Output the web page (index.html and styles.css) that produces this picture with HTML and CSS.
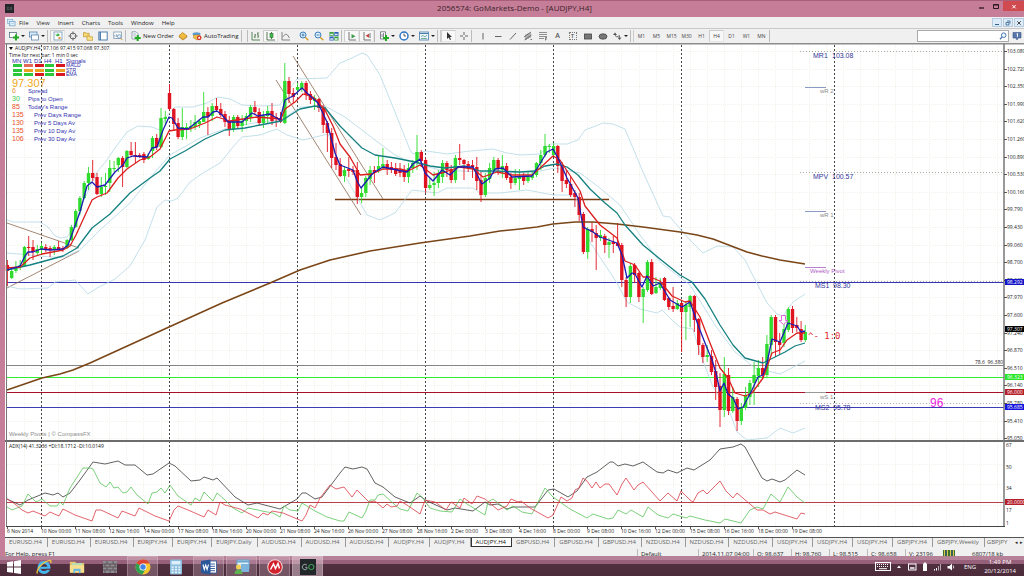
FILE: index.html
```html
<!DOCTYPE html>
<html lang="en">
<head>
<meta charset="utf-8">
<title>2056574: GoMarkets-Demo - [AUDJPY,H4]</title>
<link rel="stylesheet" href="styles.css">
</head>
<body>
<div class="window">
  <header class="titlebar">
    <svg class="app-icon" viewBox="0 0 9 9"><rect width="9" height="9" fill="#26262a"/><path d="M4 3.4H2.2v2.2H4V4.6M5.2 3.4h1.6v2.2H5.2z" fill="none" stroke="#6b7a70" stroke-width=".5"/></svg>
    <h1 class="title">2056574: GoMarkets-Demo - [AUDJPY,H4]</h1>
    <div class="win-buttons">
      <button class="win-btn" aria-label="Minimise"><svg viewBox="0 0 10 10"><path d="M3 7h5" stroke="#2c1620" stroke-width="1.3"/></svg></button>
      <button class="win-btn" aria-label="Maximise"><svg viewBox="0 0 10 10"><path d="M2.5 3.5h5v4h-5zM2.5 4h5" fill="none" stroke="#2c1620"/></svg></button>
      <button class="win-btn close" aria-label="Close"><svg viewBox="0 0 10 10"><path d="M3.3 4l3.4 3.4M6.7 4L3.3 7.4" stroke="#fff"/></svg></button>
    </div>
  </header>

  <nav class="menubar">
    <svg class="menu-icon" viewBox="0 0 10 9"><rect x=".5" y=".5" width="6" height="4.5" fill="#dcefff" stroke="#7aa5c8" stroke-width=".7"/><rect x="2.5" y="2.7" width="6.5" height="5" fill="#e8f5ff" stroke="#5d93c0" stroke-width=".7"/><path d="M3.5 6l1.5-1.4 1 1 2-1.5" fill="none" stroke="#68a0cc" stroke-width=".6"/></svg>
    <button class="menu">File</button>
    <button class="menu">View</button>
    <button class="menu">Insert</button>
    <button class="menu">Charts</button>
    <button class="menu">Tools</button>
    <button class="menu">Window</button>
    <button class="menu">Help</button>
    <div class="mdi-buttons">
      <button class="mdi" aria-label="Minimise chart"><svg viewBox="0 0 8 8"><path d="M2 5.5h4" stroke="#35608c"/></svg></button>
      <button class="mdi" aria-label="Restore chart"><svg viewBox="0 0 8 8"><path d="M3 2h3v2.5M2 3.5h3v2.5H2z" fill="none" stroke="#35608c" stroke-width=".8"/></svg></button>
      <button class="mdi" aria-label="Close chart"><svg viewBox="0 0 8 8"><path d="M2.3 2.3l3.4 3.4M5.7 2.3L2.3 5.7" stroke="#444"/></svg></button>
    </div>
  </nav>

  <div class="toolbar" role="toolbar">
    <button class="tool drop" aria-label="New chart"><svg viewBox="0 0 10 10"><rect x=".5" y="1.5" width="7" height="5" fill="#fff" stroke="#5d6f80" stroke-width=".8"/><path d="M7 3.5v6M4 6.5h6" stroke="#22a822" stroke-width="2"/></svg><i class="caret"></i></button>
    <button class="tool drop" aria-label="Profiles"><svg viewBox="0 0 10 10"><rect x=".5" y="1" width="7.5" height="5" fill="#d9ecfb" stroke="#5b87ad" stroke-width=".8"/><rect x="2.5" y="4" width="7" height="5" fill="#fff" stroke="#5b87ad" stroke-width=".8"/></svg><i class="caret"></i></button>
    <span class="sep"></span>
    <button class="tool on" aria-label="Market Watch"><svg viewBox="0 0 10 10"><rect x="1" y="1" width="8" height="8" fill="#fff" stroke="#6b93b4" stroke-width=".8"/><path d="M2 3.5h2.5V2L7 4 4.500 5.500z" fill="#2fae3c"/><circle cx="6.500" cy="7" r="1.200" fill="#e09b3a"/></svg></button>
    <button class="tool" aria-label="Data Window"><svg viewBox="0 0 10 10"><circle cx="5" cy="5" r="3" fill="none" stroke="#666"/><path d="M5 .5v3M5 6.500v3M.5 5h3M6.500 5h3" stroke="#666"/></svg></button>
    <button class="tool" aria-label="Navigator"><svg viewBox="0 0 10 10"><path d="M.5 1.500h2l.7.8h3v3.500H.5z" fill="#f6d671" stroke="#b58a1c" stroke-width=".6"/><path d="M4 5h2l.7.8h3v3.500H4z" fill="#fbe38c" stroke="#b58a1c" stroke-width=".6"/></svg></button>
    <button class="tool" aria-label="Terminal"><svg viewBox="0 0 10 10"><rect x=".8" y="1" width="8.400" height="8" fill="#fff" stroke="#4f7eae"/><path d="M1.500 1v8h1.500V1z" fill="#4f7eae"/></svg></button>
    <button class="tool" aria-label="Strategy Tester"><svg viewBox="0 0 10 10"><rect x=".8" y="1" width="7.500" height="6.500" fill="#fff" stroke="#7b98b2" stroke-width=".8"/><path d="M2 6V4M3.500 6V3M5 6V3.500" stroke="#7b98b2" stroke-width=".7"/><circle cx="6.300" cy="5.500" r="1.800" fill="#e4f2fc" stroke="#6389ab" stroke-width=".7"/><path d="M7.500 7l2 2.200" stroke="#c99b3c"/></svg></button>
    <span class="sep wide"></span>
    <button class="tool text neworder"><svg viewBox="0 0 10 10"><path d="M1 .8h4l2 2V8H1z" fill="#fff" stroke="#7b8fa2" stroke-width=".8"/><path d="M2.200 3h3M2.200 5h3" stroke="#7b8fa2" stroke-width=".7"/><path d="M6.700 4v6M3.700 7h6" stroke="#22a822" stroke-width="2"/></svg>New Order</button>
    <button class="tool" aria-label="MetaEditor"><svg viewBox="0 0 10 10"><path d="M.8 5L4.500 1.500 9.200 5 5 8.500z" fill="#f2bb3e" stroke="#b37c14" stroke-width=".7"/><path d="M1 6l4 3 4.200-3" fill="none" stroke="#c38a1f" stroke-width=".8"/></svg></button>
    <button class="tool text autotrade"><svg viewBox="0 0 10 10"><ellipse cx="4.500" cy="3" rx="4" ry="1.700" fill="#5a9bd2"/><path d="M1.500 4h6.500v3L5 9 1.500 7z" fill="#f0c24d" stroke="#a87f23" stroke-width=".5"/><circle cx="7.200" cy="6.800" r="2.400" fill="#d9342b"/><rect x="6.300" y="5.900" width="1.800" height="1.800" fill="#fff"/></svg>AutoTrading</button>
    <span class="sep double"></span>
    <button class="tool" aria-label="Bar chart"><svg viewBox="0 0 10 10"><path d="M1 9V1M1 9h8M4 7V3M3 6h1M4 4h1M7 7V1M6 3h1M7 5h1" fill="none" stroke="#4a7a4a" stroke-width=".9"/></svg></button>
    <button class="tool on" aria-label="Candlesticks"><svg viewBox="0 0 10 10"><path d="M1 9V1M1 9h8M5.500 1v7" fill="none" stroke="#4a6a4a" stroke-width=".9"/><rect x="4" y="2.500" width="3" height="4" fill="#3fc04a" stroke="#286b2c" stroke-width=".6"/></svg></button>
    <button class="tool" aria-label="Line chart"><svg viewBox="0 0 10 10"><path d="M1 9V1M1 9h8M1.500 6l3-3 2 1 2 3" fill="none" stroke="#777" stroke-width=".9"/></svg></button>
    <span class="sep blank"></span>
    <button class="tool" aria-label="Zoom in"><svg viewBox="0 0 10 10"><circle cx="4" cy="4" r="3" fill="#dceefb" stroke="#3b7fc0"/><path d="M2.500 4h3M4 2.500v3" stroke="#2d6cab" stroke-width=".8"/><path d="M6.300 6.300l3 3" stroke="#d6a02c" stroke-width="1.500"/></svg></button>
    <button class="tool" aria-label="Zoom out"><svg viewBox="0 0 10 10"><circle cx="4" cy="4" r="3" fill="#dceefb" stroke="#3b7fc0"/><path d="M2.500 4h3" stroke="#2d6cab" stroke-width=".8"/><path d="M6.300 6.300l3 3" stroke="#d6a02c" stroke-width="1.500"/></svg></button>
    <button class="tool" aria-label="Tile windows"><svg viewBox="0 0 10 10"><rect x=".5" y="1" width="4.200" height="4" fill="#3da23d"/><rect x="5.300" y="1" width="4.200" height="4" fill="#2c62b5"/><rect x=".5" y="5.500" width="4.200" height="4" fill="#2c62b5"/><rect x="5.300" y="5.500" width="4.200" height="4" fill="#3da23d"/><path d="M1.300 3.500h2.600M6 3.500h2.600M1.300 8h2.600M6 8h2.600" stroke="#e6f3ff" stroke-width="1.400"/></svg></button>
    <span class="sep"></span>
    <button class="tool on" aria-label="Auto scroll"><svg viewBox="0 0 10 10"><path d="M2 1v8h7" fill="none" stroke="#666" stroke-width=".9"/><path d="M4.500 3l4 2.200-4 2.200z" fill="#3e9b4c"/></svg></button>
    <button class="tool on" aria-label="Chart shift"><svg viewBox="0 0 10 10"><path d="M2 1v8h7M8 2v5" fill="none" stroke="#666" stroke-width=".9"/><path d="M7 2.800L3.500 4.800 7 6.800z" fill="#c24040"/></svg></button>
    <span class="sep"></span>
    <button class="tool drop" aria-label="Indicators"><svg viewBox="0 0 10 10"><path d="M1.500.8h5V8h-5z" fill="#fff" stroke="#667" stroke-width=".8"/><path d="M3 6V3M4.500 6V2" stroke="#667" stroke-width=".8"/><path d="M7 4v6M4 7h6" stroke="#22a822" stroke-width="2"/></svg><i class="caret"></i></button>
    <button class="tool drop" aria-label="Periods"><svg viewBox="0 0 10 10"><circle cx="5" cy="5" r="4" fill="#fff" stroke="#2e76c4" stroke-width="1.500"/><path d="M5 2.500V5h2" fill="none" stroke="#333" stroke-width=".8"/></svg><i class="caret"></i></button>
    <button class="tool drop" aria-label="Templates"><svg viewBox="0 0 10 10"><rect x=".5" y="1" width="9" height="8" fill="#e9f5ff" stroke="#4a7ca8" stroke-width=".8"/><path d="M.5 2.500h9" stroke="#4a7ca8"/><path d="M2 5.500l2-1 2 1.500 2-2M2 7.500h6" fill="none" stroke="#53906a" stroke-width=".7"/></svg><i class="caret"></i></button>
    <span class="sep double wide"></span>
    <button class="tool on" aria-label="Cursor"><svg viewBox="0 0 10 10"><path d="M3 1v7l1.700-1.600L6 9l1-.5-1.200-2.500H8z" fill="#333"/></svg></button>
    <button class="tool" aria-label="Crosshair"><svg viewBox="0 0 10 10"><path d="M5 1v3M5 6v3M1 5h3M6 5h3" stroke="#555" stroke-width=".9"/></svg></button>
    <span class="sep wide"></span>
    <button class="tool" aria-label="Vertical line"><svg viewBox="0 0 10 10"><path d="M5 2v6.500" stroke="#555" stroke-width=".9"/></svg></button>
    <button class="tool" aria-label="Horizontal line"><svg viewBox="0 0 10 10"><path d="M2 5.500h6.500" stroke="#555" stroke-width=".9"/></svg></button>
    <button class="tool" aria-label="Trendline"><svg viewBox="0 0 10 10"><path d="M2 8.500L8 2" stroke="#555" stroke-width=".9"/></svg></button>
    <button class="tool" aria-label="Channel"><svg viewBox="0 0 10 10"><path d="M1 6l7-5M1.500 9l7-5M3 3.500V9M5 2.500V8M7 2v5M7.500 8.500h1.500" stroke="#555" stroke-width=".8"/></svg></button>
    <button class="tool" aria-label="Fibonacci"><svg viewBox="0 0 10 10"><path d="M1 1.500h8M1 3.500h8M1 5.500h8M1 7.500h5" stroke="#777" stroke-width=".8"/><path d="M7.500 9.500v-3H9M7.500 8H9" fill="none" stroke="#555" stroke-width=".7"/></svg></button>
    <button class="tool glyph">A</button>
    <button class="tool glyph boxed"><span>T</span></button>
    <button class="tool" aria-label="Rectangle"><svg viewBox="0 0 10 10"><rect x="1.500" y="3" width="7" height="5" fill="#777" stroke="#444" stroke-width=".8"/></svg></button>
    <button class="tool" aria-label="Ellipse"><svg viewBox="0 0 10 10"><ellipse cx="5" cy="5.500" rx="4" ry="2.700" fill="#777" stroke="#444" stroke-width=".8"/></svg></button>
    <button class="tool drop" aria-label="Arrows"><svg viewBox="0 0 10 10"><path d="M3 1.500l2 2.500H1zM7.500 9l2-2.500h-4z" fill="#555"/><path d="M3 4l1.500 2 3-1.500v2" fill="none" stroke="#555" stroke-width=".8"/></svg><i class="caret"></i></button>
    <span class="sep double wide"></span>
    <button class="tool tf">M1</button><button class="tool tf">M5</button><button class="tool tf">M15</button><button class="tool tf">M30</button><button class="tool tf">H1</button><button class="tool tf on">H4</button><button class="tool tf">D1</button><button class="tool tf">W1</button><button class="tool tf">MN</button>
    <span class="sep"></span>
    <label class="search">
      <input type="text" aria-label="Search">
      <svg viewBox="0 0 8 8"><circle cx="4.700" cy="3.200" r="2.300" fill="#eaf4ff" stroke="#4b7bb0"/><path d="M3 5L1 7.300" stroke="#4b7bb0" stroke-width="1.300"/></svg>
    </label>
    <button class="chat" aria-label="Chat"><svg viewBox="0 0 10 10"><path d="M1 1.500h8v5.500H6L5 9 4 7H1z" fill="#5876ab" stroke="#3c5687" stroke-width=".6"/><path d="M4.500 3l1-.5V6" fill="none" stroke="#fff" stroke-width=".9"/></svg></button>
  </div>

  <main class="chart-pane">
    <svg id="chart" class="chart" viewBox="5 43 1019 494" role="img" aria-label="AUDJPY H4 chart">
      <rect x="6" y="43" width="1018" height="494" fill="#fff"/>
      <g id="grid" class="grid"></g>
      <g id="separators" class="separators"></g>

      <g class="levels">
        <path d="M7 282.500H1004" stroke="#3434b4"/>
        <path d="M7 365.500H1004" stroke="#848484"/>
        <path d="M7 377.500H1004" stroke="#2cf02c"/>
        <path d="M7 392.500H1004" stroke="#a8102c"/>
        <path d="M7 407.500H1004" stroke="#3c3cb4"/>
        <path d="M7 502.500H1004" stroke="#bc4048"/>
        <path d="M335 199.500H609" stroke="#7a3c10" stroke-width="1.500"/>
      </g>
      <g class="dotted">
        <path d="M800 51.500H1004M800 281.500H1004M800 172.500H1004" stroke="#a8a8a8"/>
        <path d="M800 403.500H1004" stroke="#b4b4b4"/>
      </g>
      <g class="pivots">
        <path d="M805 87.500H826M805 211.500H826" stroke="#8c9ac4"/>
        <path d="M805 267.500H826" stroke="#b880d0"/>
        <path d="M805 392.500H826" stroke="#999"/>
      </g>
      <g class="trends">
        <path d="M7 223L79 248M7 288L79 251M276 80L361 215M293 56L383 199"/>
      </g>
      <g id="bands" class="bands"></g>
      <g id="candles"></g>
      <g id="averages" class="averages"></g>
      <path d="M781.500 315.500h4v5h2.500l-4.500 4-4.500-4h2.500z" fill="#fff" stroke="#e03ee0" stroke-width=".8"/>

      <g class="label-blue">
        <text x="813" y="58">MR1</text><text x="832" y="58">103.08</text>
        <text x="813" y="179">MPV</text><text x="832" y="179">100.57</text>
        <text x="815" y="288">MS1</text><text x="833" y="288">98.30</text>
        <text x="815" y="410">MS2</text><text x="833" y="410">95.78</text>
      </g>
      <g class="label-grey">
        <text x="820" y="93">wR 2</text><text x="820" y="217">wR 1</text><text x="820" y="399">wS 1</text>
        <text x="9" y="436">Weekly Pivots | © CompassFX</text>
      </g>
      <text class="label-purple" x="810" y="273">Weekly Pivot</text>
      <text class="label-signal" x="808" y="339">^- 1:0</text>
      <text class="label-magenta" x="930" y="407">96</text>
      <text class="label-small" x="975" y="364">78.6&#160; 96.380</text>

      <path d="M9 47h4l-2 3z" fill="#111"/>
      <text class="label-head" x="15" y="50">AUDJPY,H4&#160; 97.106 97.415 97.068 97.307</text>
      <text class="label-head" x="9" y="57">Time for next bar: 1 min 0 sec</text>
      <g id="signals" class="signals"></g>
      <text class="label-price" x="12" y="87">97.307</text>
      <g id="stats" class="stats"></g>

      <rect x="5" y="440" width="1019" height="2" fill="#6c6c6c"/>
      <text class="label-head" x="9" y="448">ADX(14) 41.3236 +DI:18.1712 -DI:10.0149</text>
      <g id="adx" class="adx"></g>

      <path d="M5 43.500H1024" stroke="#8c8c8c" stroke-width="2"/>
      <path d="M6.500 44V527" stroke="#777"/>
      <path d="M1004 44V527" stroke="#777" stroke-width="1.500"/>
      <path d="M6 526.500H1005" stroke="#444"/>
      <g id="axis" class="axis"></g>
    </svg>
  </main>

  <nav class="tabs" id="tabs"></nav>

  <footer class="statusbar">
    <span class="help">For Help, press F1</span>
    <span class="cell profile">Default</span>
    <span class="cell time">2014.11.07 04:00</span>
    <span class="cell">O: 98.637</span>
    <span class="cell">H: 98.760</span>
    <span class="cell">L: 98.515</span>
    <span class="cell">C: 98.658</span>
    <span class="cell">V: 23196</span>
    <span class="traffic"><svg viewBox="0 0 12 7"><rect width="12" height="7" fill="#40702c"/><path d="M1.500 0v7M4.500 0v7M7.500 0v7M10.500 0v7" stroke="#d5c94a"/><path d="M3 0v7M9 0v7" stroke="#34528c"/></svg>6807/18 kb</span>
  </footer>
</div>

<div class="taskbar">
  <button class="start" aria-label="Start"><svg viewBox="0 0 14 14"><path d="M0 2.200l6-.9v5.300H0zM7 1.200L14 0v6.600H7zM0 7.500h6v5.300l-6-.9zM7 7.500h7V14l-7-1.100z" fill="#fff"/></svg></button>
  <button class="task" aria-label="Internet Explorer"><svg viewBox="0 0 16 16"><circle cx="8" cy="8.500" r="5" fill="none" stroke="#45b6ee" stroke-width="3"/><path d="M4.500 8.800h9.500" stroke="#45b6ee" stroke-width="2.200"/><path d="M10 11h5v-1.300h-5z" fill="#5a3a49"/><path d="M1.500 14.500C-.5 12 5 4 13 1.500c2-.5 2.500.8 1.500 2.500" fill="none" stroke="#f0c63e" stroke-width="1.300"/></svg></button>
  <button class="task" aria-label="File Explorer"><svg viewBox="0 0 18 16"><path d="M1 2h6l1 1.500h9V14H1z" fill="#e9c462"/><path d="M3 3.500h12V9H3z" fill="#b9dcb3"/><path d="M1 6h16v8.500H1z" fill="#f8df8e"/><path d="M5 10h8v5h-1.800v-2.500H6.800V15H5z" fill="#6cb7df"/></svg></button>
  <button class="task" aria-label="Bricks"><svg viewBox="0 0 16 14"><rect x="1" y="1" width="14" height="12" fill="#8b8b90"/><path d="M1 4h14M1 7h14M1 10h14M5 1v3M11 1v3M3 4v3M8 4v3M13 4v3M5 7v3M11 7v3M3 10v3M8 10v3M13 10v3" stroke="#5c4e56" stroke-width=".9"/></svg></button>
  <button class="task open" aria-label="Chrome"><svg viewBox="0 0 16 16"><circle cx="8" cy="8" r="7.500" fill="#f5c62d"/><path d="M8 8L1.500 4.200A7.500 7.500 0 0 1 14.600 4.500H8z" fill="#dd4437"/><path d="M8 8L1.500 4.200A7.500 7.500 0 0 0 7.300 15.400L11 9.500z" fill="#2fa152"/><circle cx="8" cy="8" r="3.500" fill="#fff"/><circle cx="8" cy="8" r="2.700" fill="#3f83e6"/></svg></button>
  <button class="task" aria-label="Calculator"><svg viewBox="0 0 14 16"><rect x="1" y=".5" width="12" height="15" rx="1" fill="#8bbbdc"/><rect x="2.500" y="2" width="9" height="3.500" fill="#d9f0fc"/><path d="M2.500 8h9M2.500 10.700h9M2.500 13.400h9" stroke="#e8f5fc" stroke-width="1.700" stroke-dasharray="2.200 1.200"/></svg></button>
  <button class="task open" aria-label="Word"><svg viewBox="0 0 16 16"><rect x="7" y="2" width="8.500" height="12" fill="#fff" stroke="#2a569a" stroke-width=".8"/><path d="M9 5h5M9 7.300h5M9 9.500h5M9 11.700h5" stroke="#2a569a" stroke-width=".9"/><path d="M0 2l9.500-1.600v15.200L0 14z" fill="#2a569a"/><path d="M2 5.500l1.300 5L4.700 6l1.400 4.500 1.400-5" fill="none" stroke="#fff" stroke-width="1.100"/></svg></button>
  <button class="task open" aria-label="Messenger"><svg viewBox="0 0 16 16"><rect x="3" y="1" width="12" height="9" fill="#dceefa" stroke="#6ba4cc"/><path d="M3 2.500h12" stroke="#6ba4cc" stroke-width="2"/><rect x="7" y="5" width="8" height="8" fill="#7cb4dd"/><circle cx="4.500" cy="8" r="2.500" fill="#f3cf55"/><path d="M.5 15c0-6 8-6 8 0z" fill="#5fb04e"/></svg></button>
  <button class="task open" aria-label="Trading app"><svg viewBox="0 0 16 16"><circle cx="8" cy="8" r="7.800" fill="#f2d8d8"/><circle cx="8" cy="8" r="6.800" fill="#d2202c"/><path d="M3.500 10.500L6.500 5l2 4.500L11 4.500l1.500 5" fill="none" stroke="#fff" stroke-width="1.500"/></svg></button>
  <button class="task open active" aria-label="GoMarkets"><svg viewBox="0 0 16 16"><rect width="16" height="16" fill="#22272a"/><path d="M7 6.200A2.700 2.700 0 1 0 7 9.800V8.300H5.200" fill="none" stroke="#9aa5a5"/><circle cx="11.300" cy="8" r="2.600" fill="none" stroke="#3fae5a"/></svg></button>
  <div class="tray">
    <svg class="kbd" viewBox="0 0 16 9"><rect x=".5" y=".5" width="15" height="8" fill="none" stroke="#fff"/><path d="M2 2.500h12M2 4.500h12" stroke="#fff" stroke-dasharray="1 1"/><path d="M4 6.700h8" stroke="#fff"/></svg>
    <svg class="tri" viewBox="0 0 10 10"><path d="M5 3.500l2 2.500H3z" fill="#fff"/></svg>
    <svg viewBox="0 0 10 10"><rect x="1.500" y="2" width="7.500" height="6" fill="none" stroke="#fff"/><path d="M3 6h4.500" stroke="#fff" stroke-width="1.500"/></svg>
    <svg viewBox="0 0 10 10"><path d="M4 .5h2V1.500h1V9H3V1.500h1z" fill="#fff"/></svg>
    <svg viewBox="0 0 10 10"><path d="M1.500 8.500V7M3.500 8.500V6" stroke="#fff"/><path d="M5.500 8.500V4M7.500 8.500V2" stroke="#b9a6b0"/></svg>
    <svg viewBox="0 0 10 10"><path d="M1.500 4h2L6 1.500v7L3.500 6.500h-2z" fill="#fff"/><path d="M7.200 3.500a2.500 2.500 0 0 1 0 3" fill="none" stroke="#fff" stroke-width=".8"/></svg>
    <span class="lang">ENG</span>
    <span class="clock"><span>1:49 PM</span><span>20/12/2014</span></span>
  </div>
</div>
<script src="chart.js"></script>
</body>
</html>
```
FILE: styles.css
```css
* { box-sizing: border-box; }
body {
  margin: 0;
  background: #c67e98;
  font: 6px/8px "Open Sans", "Noto Sans", sans-serif;
  color: #222;
  overflow-x: hidden;
}
button { font: inherit; color: inherit; background: none; border: 0; padding: 0; margin: 0; }
svg { display: block; }

.window { padding-left: 5px; border-top: 1px solid #a85f7a; }

.titlebar { display: flex; height: 16px; align-items: flex-start; }
.app-icon { width: 9px; height: 9px; margin-top: 3px; }
.title { flex: 1; margin: 1px 0 0; text-align: center; font-size: 8px; line-height: 12px; font-weight: 400; color: #3b1f2b; padding-left: 42px; }
.win-buttons { display: flex; }
.win-btn { width: 15px; height: 10px; display: flex; justify-content: center; }
.win-btn svg { width: 10px; height: 10px; }
.win-btn.close { width: 21px; background: #cf4b4f; }

.menubar { display: flex; gap: 8px; height: 11px; align-items: center; background: #f0f0f0; padding-left: 2px; }
.menu-icon { width: 9px; height: 8px; margin-right: -5px; }
.menu { flex: none; line-height: 10px; }
.mdi-buttons { margin-left: auto; display: flex; gap: 1px; }
.mdi { width: 10px; height: 9px; background: #dcebf8; border: 1px solid #b4cbe0; display: flex; align-items: center; justify-content: center; }
.mdi svg { width: 8px; height: 8px; }

.toolbar { display: flex; height: 15px; align-items: center; background: #f0f0f0; border-top: 1px solid #c8c8c8; padding-left: 2px; }
.tool { flex: none; width: 15px; height: 12px; display: flex; align-items: center; justify-content: center; }
.tool svg { width: 10px; height: 10px; flex: none; }
.tool.on { background: #f8f8f8; border: 1px solid #ccc; border-right-color: #e4e4e4; border-bottom-color: #e4e4e4; }
.tool.drop { width: 20px; gap: 2px; }
.caret { border: 2px solid transparent; border-top-color: #222; border-bottom: 0; }
.tool.text { gap: 2px; justify-content: flex-start; color: #222; padding-left: 2px; }
.neworder { width: 46px; }
.autotrade { width: 51px; }
.tool.glyph { font-size: 7px; font-weight: 600; color: #555; }
.tool.boxed span { border: 1px dotted #777; width: 8px; height: 8px; line-height: 6px; font-size: 6px; }
.tool.tf { font-size: 5px; color: #444; }
.tool.text, .tool.drop, .tool.tf { flex: none; }
.neworder.text { width: 46px; }
.autotrade.text { width: 51px; }
.sep { flex: none; width: 3px; height: 12px; border-left: 1px solid #bbb; }
.sep.wide { width: 4px; }
.sep.double { width: 7px; border-right: 1px solid #bbb; }
.sep.double.wide { width: 4px; border-right: 1px solid #ccc; }
.sep.blank { border-color: transparent; }
.search { margin-left: auto; width: 92px; height: 12px; display: flex; align-items: center; background: #fff; border: 1px solid #aaa; }
.search input { flex: 1; min-width: 0; height: 8px; border: 0; padding: 0 2px; font: inherit; background: none; outline: 0; }
.search svg { width: 8px; height: 8px; margin-right: 1px; }
.chat { width: 15px; display: flex; justify-content: center; }
.chat svg { width: 10px; height: 10px; }

.chart-pane { background: #fff; }
.chart { width: 100%; height: auto; }
.grid { stroke: #f3f3ec; stroke-dasharray: 1 1; fill: none; }
.separators { stroke: #444; stroke-dasharray: 2 2; fill: none; }
.levels { fill: none; }
.dotted { fill: none; stroke-dasharray: 1 2; }
.pivots { fill: none; }
.trends { fill: none; stroke: #8b6a50; stroke-width: .8; }
.bands { fill: none; stroke: #b4d8e6; stroke-width: .8; }
.averages { fill: none; stroke-linejoin: round; }
.adx { fill: none; stroke-width: .8; }
.ma-slow { stroke: #7a4618; stroke-width: 1.6; }
.ma-mid { stroke: #148080; stroke-width: 1.3; }
.ma-red { stroke: #dc1e1e; stroke-width: 1.3; }
.ma-blue { stroke: #1c1cb4; stroke-width: 1.3; }
.up { fill: #2edb2e; stroke: #2edb2e; }
.down { fill: #e01420; stroke: #e01420; }
.wick { stroke-width: .9; }
.body { stroke: none; }
.adx-main { stroke: #3a3a3a; }
.adx-plus { stroke: #5cc45c; }
.adx-minus { stroke: #dc3c48; }

.chart text { font-family: "Open Sans", "Noto Sans", sans-serif; }
.chart .label-blue text { font: 7px "Liberation Sans", Arial, sans-serif; fill: #34349a; }
.chart .label-grey text { font: 6px "Liberation Sans", Arial, sans-serif; fill: #8c8c8c; }
.chart .label-purple { font: 6px "Liberation Sans", Arial, sans-serif; fill: #b060c8; }
.chart .label-signal { font: 9px "DejaVu Sans Mono", monospace; fill: #e23030; }
.chart .label-magenta { font: 12px "Liberation Sans", Arial, sans-serif; fill: #f024e0; }
.chart .label-price { font: 11px "Liberation Sans", Arial, sans-serif; fill: #f0a820; }
.chart .label-small { font-size: 5px; fill: #222; }
.chart .label-head { font-size: 5px; fill: #111; }
.chart .signals text { font: 6px "Liberation Sans", Arial, sans-serif; fill: #2c2cac; }
.chart .signals .row-name { font-size: 5px; }
.chart .stats text { font: 6px "Liberation Sans", Arial, sans-serif; fill: #3434b4; }
.chart .stats .value { font-size: 7px; }
.chart .stats .orange { fill: #f0963c; }
.chart .stats .green { fill: #3ccc4c; }
.chart .stats .red { fill: #e8501e; }
.chart .axis text { font-size: 5px; fill: #222; }
.chart .axis .boxed { fill: #fff; }

.tabs { display: flex; height: 12px; background: #f0f0f0; border-top: 1px solid #555; overflow: hidden; }
.tab { flex: none; height: 9px; line-height: 9px; padding: 0 5px 0 4px; color: #666; border-right: 1px solid #999; white-space: nowrap; }
.tab.active { background: #fff; color: #111; border: 1px solid #333; border-top: 0; }
.tab.cut { border-right: 0; padding: 0 0 0 2px; }
.tab-scroll { margin-left: auto; display: flex; }
.tab-scroll button { width: 5px; height: 9px; font-size: 5px; line-height: 9px; }

.statusbar { display: flex; height: 7px; background: #f0f0f0; line-height: 11px; white-space: nowrap; }
.statusbar .help { flex: 1; }
.statusbar .cell { width: 38px; flex: none; padding-left: 3px; border-left: 1px solid #bbb; }
.statusbar .profile { width: 61px; }
.statusbar .time { width: 55px; }
.statusbar .traffic { width: 81px; display: flex; gap: 17px; }
.statusbar .traffic svg { width: 12px; height: 7px; margin-top: 1px; flex: none; }

.taskbar {
  position: relative;
  display: flex;
  height: 21px;
  background: linear-gradient(rgba(178, 130, 152, .85) 0 4px, #96607a 4px 8px, #512f40 8px, #4a2a39);
  color: #fff;
}
.start { width: 27px; display: flex; align-items: center; justify-content: center; }
.start svg { width: 14px; height: 14px; }
.task { width: 31px; margin: 0 1px; height: 21px; display: flex; align-items: center; justify-content: center; }
.task svg { width: 16px; height: 16px; }
.task.open { background: rgba(220, 190, 205, .28); border: 1px solid rgba(230, 205, 215, .3); }
.task.active { background: rgba(230, 205, 215, .5); }
.tray { margin-left: auto; display: flex; align-items: center; gap: 3px; padding-right: 8px; }
.tray svg { width: 10px; height: 10px; }
.tray .kbd { width: 16px; height: 9px; }
.lang { padding: 0 5px; }
.clock { display: flex; flex-direction: column; align-items: center; line-height: 9px; }
```
FILE: chart.js
```js
const NS = 'http://www.w3.org/2000/svg';
const byId = (id) => document.getElementById(id);
function add(parent, name, attrs, text) {
  const el = document.createElementNS(NS, name);
  for (const key in attrs) el.setAttribute(key, attrs[key]);
  if (text !== undefined) el.textContent = text;
  parent.appendChild(el);
  return el;
}

/* One bar: direction, body top, body bottom, high, low */
const bars = `r265,271,260,286 g271,278,269,279 g267,271,261,273 g265,267,260,270 g247,266,246,266 r247,248,236,256
r247,252,240,260 g249,253,245,255 g246,250,243,255 r247,249,244,252 r248,250,246,257 g247,250,245,255 r247,249,241,250
r248,249,246,252 g240,248,239,249 g227,240,225,241 g211,227,209,228 g198,211,196,215 g183,198,181,199 g173,183,167,190
r173,178,160,181 r177,194,173,195 g187,194,177,197 g186,187,173,195 g168,183,160,192 g168,169,161,172 g158,165,157,172
r158,167,156,187 g151,167,150,168 r151,155,142,157 r155,156,142,163 r155,156,153,158 r154,160,152,163 g156,159,153,160
g138,151,136,158 r138,147,134,150 g118,147,108,148 g117,119,111,125 r93,109,84,110 r109,124,108,131 r123,137,118,139
g127,137,108,140 g127,129,123,139 g126,128,120,132 g122,127,115,130 g121,124,119,128 g112,122,92,122 r112,117,107,135
g106,116,103,121 r106,110,98,112 r109,115,103,117 r114,122,111,127 r121,129,116,136 g117,129,115,132 r117,126,115,128
g121,126,115,132 g116,121,113,125 g107,117,105,122 r107,112,101,115 r112,123,108,125 g116,123,111,128 g111,116,106,123
r111,121,103,125 r117,119,113,127 r118,122,112,123 g81,123,63,124 r81,94,77,103 r93,97,88,103 g87,90,83,92
g83,89,81,92 r83,95,81,100 r94,100,91,104 g98,101,95,110 r99,108,98,112 r108,125,105,133 r123,133,121,152
r133,158,128,168 r157,165,143,170 r164,176,158,177 g170,176,166,182 r169,171,157,177 r170,172,166,175 r170,197,162,204
g193,197,187,203 g178,193,176,197 g170,179,166,185 r170,172,166,183 g166,171,155,173 g164,168,148,170 r164,168,160,175
r167,170,162,173 r168,174,163,176 r170,173,163,177 r170,177,165,182 g168,177,163,183 g163,168,160,173 g152,163,135,170
r152,161,150,167 r160,188,158,193 g185,188,178,190 g183,185,172,196 g173,183,170,188 g163,177,160,183 r163,170,161,177
r169,180,165,183 g158,180,155,183 r158,160,144,165 r160,164,159,180 r164,166,161,172 r165,167,160,178 r167,181,157,190
r180,195,172,202 g178,195,173,197 g168,179,163,183 g160,170,157,173 r160,168,158,175 g166,170,155,178 r166,178,163,180
r177,183,173,189 g178,183,169,185 g177,179,169,190 r176,181,173,185 g177,181,172,183 g175,178,172,180 g163,175,162,177
g155,163,150,170 g146,155,134,157 g146,147,144,153 g146,155,143,157 r146,166,145,173 r165,181,162,192 r180,184,170,188
r184,195,177,197 r193,197,190,207 r197,215,193,221 r214,252,212,254 g229,252,227,259 r229,232,222,242 r233,238,225,270
g235,238,230,241 r236,245,234,253 g242,245,238,258 r242,244,236,253 r243,246,223,246 r245,280,243,287 r280,297,277,307
g266,297,263,303 r265,275,263,283 r273,297,272,302 g289,297,287,323 g262,290,260,292 r262,294,259,295 g287,293,277,294
g282,288,278,290 r278,300,277,301 r298,307,297,310 r306,309,287,312 g303,309,300,310 r303,312,302,352 g305,312,302,340
g296,307,295,327 r296,320,295,332 r319,345,318,355 r345,357,343,363 g355,357,345,362 r356,372,350,375 r371,387,360,400
r386,410,373,427 g374,410,357,417 r375,411,368,415 g397,411,387,413 r399,421,397,431 g407,421,403,425 g395,408,387,410
g383,397,380,405 g375,383,362,405 g368,376,360,387 r368,375,357,378 g344,375,335,377 g317,345,315,355 r317,342,315,357
r342,345,333,355 g329,343,320,347 g309,330,307,332 r309,328,306,333 r325,328,317,332 r329,340,321,342 g332,340,325,342`
  .split(/\s+/);
bars.forEach((bar, i) => {
  const [top, bottom, high, low] = bar.slice(1).split(',').map(Number);
  const x = 7.4 + i * 4.267;
  const g = add(byId('candles'), 'g', { class: bar[0] === 'g' ? 'up' : 'down' });
  add(g, 'path', { class: 'wick', d: `M${x.toFixed(1)} ${high}V${low}` });
  add(g, 'rect', { class: 'body', x: (x - 1.7).toFixed(1), y: top, width: 3.4, height: Math.max(bottom - top, 1) });
});

const line = (target, cls, points) => add(byId(target), 'polyline', { class: cls, points });

line('bands', 'upper', '7,220 13,222 40,222 48,227 55,236 61,238 67,237 72,230 84,200 97,172 107,160 115,148 127,132 138,126 152,127 160,130 166,117 175,107 193,107 207,103 218,97 230,99 242,105 260,106 280,105 287,92 297,79 327,78 340,63 352,58 362,53 367,55 380,75 395,112 410,150 413,154 427,151 447,154 470,151 493,149 507,153 520,155 540,154 550,144 567,144 578,140 585,130 593,127 603,123 613,124 625,129 633,148 643,172 663,216 670,217 690,240 703,253 717,246 733,247 745,260 767,303 777,314 783,316 793,302 805,294');
line('bands', 'lower', '7,286 20,289 48,288 55,282 75,280 88,294 97,288 115,279 130,266 145,240 157,207 165,200 172,201 178,198 190,182 203,173 220,163 233,147 242,137 260,135 277,129 287,135 303,140 328,134 334,150 340,167 357,197 367,215 380,220 395,213 412,190 437,193 447,188 473,188 480,193 500,193 527,190 553,195 575,195 582,217 590,242 617,283 627,302 640,309 657,313 662,310 673,321 680,327 693,329 700,353 713,387 730,413 737,432 747,440 767,438 780,428 793,433 805,428');
line('bands', 'middle', '7,253 30,255 50,257 65,257 80,250 100,230 130,203 155,172 170,155 200,138 230,127 260,122 281,120 300,107 325,106 345,117 375,140 395,155 410,162 440,170 480,172 530,173 555,168 580,173 600,188 620,205 640,235 660,262 690,285 715,325 735,352 755,368 780,374 805,361');

line('averages', 'ma-slow', '7,390 42,378 60,374 73,370 90,363 169,327 222,303 270,283 300,270 330,260 370,251 420,243 470,236 500,231 520,229 537,227 553,224 575,222 593,222 617,224 643,227 680,232 697,235 713,239 747,252 762,256 780,260 805,264');
line('averages', 'ma-mid', '7,270 30,265 63,256 77,248 92,228 110,214 130,193 150,178 160,171 170,159 185,151 205,139 225,130 245,128 260,125 281,121 300,109 315,106 325,108 340,126 350,136 362,148 375,155 395,158 415,162 430,166 445,168 465,166 480,171 495,171 520,172 535,171 545,166 557,164 567,167 578,175 590,189 605,203 617,213 625,225 643,245 660,259 680,275 692,282 705,299 720,325 733,345 745,358 763,363 775,357 785,352 795,346 805,343');
line('averages', 'ma-red', '7,268 20,267 30,258 42,254 63,250 70,246 76,235 92,200 97,197 107,193 118,178 127,169 140,160 150,157 160,149 169,131 175,130 190,129 205,123 217,117 230,121 250,118 257,117 281,119 285,109 295,102 303,94 313,97 325,110 333,126 340,144 350,157 360,175 372,174 383,169 400,169 408,171 420,165 433,175 445,172 460,167 473,169 483,177 497,172 512,175 532,175 540,168 553,156 560,160 573,180 580,191 585,206 600,225 617,238 625,261 635,265 643,277 650,277 660,281 672,296 685,302 690,301 700,317 710,343 720,368 728,378 735,393 745,396 752,393 763,378 772,353 780,350 787,340 797,333 805,333');
line('averages', 'ma-blue', '7,270 20,266 25,256 28,252 33,252 41,249 50,250 63,249 68,245 71,237 80,212 87,186 92,182 97,187 105,185 115,172 123,165 127,158 133,156 147,157 152,148 157,147 163,130 169,117 172,118 178,128 188,129 203,117 208,117 213,112 217,111 222,115 228,122 242,122 252,113 258,116 270,114 280,120 285,100 293,96 302,88 307,93 318,103 327,122 335,153 340,165 353,170 357,181 361,188 373,173 383,167 397,170 407,172 413,164 420,159 425,173 433,181 442,170 450,175 458,167 473,167 482,184 490,178 495,169 503,168 512,177 532,176 538,167 547,152 553,149 558,158 567,178 578,198 583,227 593,232 600,237 617,243 622,255 627,278 632,273 635,274 642,287 647,276 653,286 660,283 670,300 682,307 690,302 698,325 705,343 712,360 716,373 720,391 724,383 728,394 733,398 738,409 743,407 752,390 758,377 763,375 767,363 772,339 780,342 788,323 797,326 801,332 805,331');

line('adx', 'adx-main', '7,499 20,505 28,500 45,493 53,495 58,493 63,497 70,493 80,480 93,462 105,464 118,461 125,465 135,465 147,475 153,474 169,463 175,466 191,481 200,480 204,477 213,480 217,478 235,497 248,505 257,503 280,509 297,499 302,493 306,493 315,499 322,497 340,473 345,467 353,469 362,467 367,469 375,483 383,487 395,497 410,503 420,496 427,501 447,510 455,508 473,511 485,502 490,505 498,504 507,509 513,507 535,507 548,490 554,489 568,497 577,491 587,477 597,472 610,462 613,462 618,466 625,464 633,466 643,462 657,472 663,473 668,470 677,473 687,468 694,470 710,460 720,449 733,447 741,444 745,447 762,478 767,481 772,479 780,482 785,480 797,470 805,475');
line('adx', 'adx-plus', '7,507 12,510 22,506 28,494 36,502 42,499 50,506 57,506 60,502 63,505 70,488 83,468 90,468 93,469 100,483 106,487 110,482 114,488 118,487 123,493 127,492 131,487 137,495 148,504 152,493 157,492 161,488 165,493 170,485 178,496 191,505 195,498 200,501 204,492 213,501 217,493 225,500 233,508 242,513 248,508 258,510 262,511 273,513 280,517 284,506 290,510 298,511 302,503 315,511 327,517 340,521 344,521 349,512 362,518 366,511 370,500 375,500 378,495 383,494 395,505 400,509 408,511 417,493 422,497 430,508 440,511 452,512 460,499 467,504 485,515 488,502 493,499 507,510 513,506 522,512 532,514 545,488 553,497 570,509 587,518 593,514 608,519 613,518 618,510 626,514 631,510 643,517 648,507 658,515 668,518 673,514 686,518 690,516 705,520 720,523 725,519 741,523 750,510 757,507 763,509 771,494 780,502 788,487 797,497 805,503');
line('adx', 'adx-minus', '7,499 15,504 22,510 28,513 33,511 45,516 50,512 59,516 63,509 75,515 92,521 96,510 101,510 118,518 122,511 135,516 139,508 155,516 169,521 174,510 178,506 188,510 204,517 208,510 216,515 220,502 225,505 240,509 258,518 263,513 268,515 272,511 283,513 302,521 306,515 310,505 315,508 320,498 330,485 336,489 344,487 352,497 357,490 369,502 375,501 383,508 387,504 391,507 397,506 400,501 407,505 420,514 425,500 435,502 446,510 451,502 460,508 464,498 472,504 477,496 485,499 498,510 507,506 511,499 518,502 521,501 530,508 548,518 553,515 561,497 567,501 572,498 575,490 579,488 583,478 587,481 592,488 596,482 600,488 605,484 609,484 617,495 622,484 626,478 634,490 638,485 643,482 660,501 668,493 677,501 681,491 690,500 693,502 698,493 703,490 707,494 712,489 720,481 726,491 733,498 737,493 757,510 763,510 770,514 775,512 797,519 801,513 805,514');

for (let x = 24; x < 1003; x += 17.07) add(byId('grid'), 'path', { d: `M${Math.round(x) + 0.5} 45V526` });
[464, 484, 505].forEach((y) => add(byId('grid'), 'path', { d: `M7 ${y}.5H1003` }));
[41, 169, 297, 425, 553, 681, 834].forEach((x) => add(byId('separators'), 'path', { d: `M${x}.5 45V526` }));

const axis = byId('axis');
['103.080', '102.720', '102.350', '101.990', '101.620', '101.260', '100.890', '100.530', '100.160', '99.790', '99.430',
  '99.060', '98.700', '98.330', '97.970', '97.600', '97.240', '96.870', '96.510', '96.140', '95.780', '95.410', '95.050']
  .forEach((price, i) => {
    const y = Math.round(51 + i * 17.6);
    add(byId('grid'), 'path', { d: `M7 ${y}.5H1003` });
    add(axis, 'path', { d: `M1004 ${y}.5h3`, stroke: '#555' });
    add(axis, 'text', { x: 1007, y: y + 2 }, price);
  });
[['98.292', 282, '#1414c8'], ['97.307', 329, '#000'], ['96.323', 377, '#28e628'], ['96.000', 392, '#b4202a'], ['95.685', 407, '#1414dc'], ['20.0000', 502, '#b4202a']]
  .forEach(([text, y, fill]) => {
    add(axis, 'rect', { x: 1005, y: y - 3, width: 19, height: 6, fill });
    add(axis, 'text', { x: 1007, y: y + 2, class: 'boxed' }, text);
  });
[['67', 447], ['50', 469], ['34', 490], ['17', 512], ['1', 525]].forEach(([text, y]) => add(axis, 'text', { x: 1006, y }, text));
['6 Nov 2014', '10 Nov 00:00', '11 Nov 08:00', '12 Nov 16:00', '14 Nov 00:00', '17 Nov 08:00', '18 Nov 16:00', '20 Nov 00:00',
  '21 Nov 08:00', '24 Nov 16:00', '26 Nov 00:00', '27 Nov 08:00', '28 Nov 16:00', '2 Dec 00:00', '3 Dec 08:00', '4 Dec 16:00',
  '8 Dec 00:00', '9 Dec 08:00', '10 Dec 16:00', '12 Dec 00:00', '15 Dec 08:00', '16 Dec 16:00', '18 Dec 00:00', '19 Dec 08:00']
  .forEach((date, i) => {
    const x = Math.round(7 + i * 34.13);
    add(axis, 'path', { d: `M${x}.5 527v2`, stroke: '#555' });
    add(axis, 'text', { x, y: 533 }, date);
  });

const signals = byId('signals');
['MN', 'W1', 'D1', 'H4', 'H1'].forEach((name, i) => add(signals, 'text', { x: [12, 23, 34, 44, 55][i], y: 63 }, name));
add(signals, 'text', { x: 66, y: 63 }, 'Signals');
const colours = { g: '#2cc83c', s: '#e46a5a', r: '#d81820', o: '#eca020' };
[['MACD', 'gsrgr', 64], ['STR', 'googo', 69], ['EMA', 'ggrgr', 73]].forEach(([name, row, y]) => {
  [...row].forEach((c, i) => add(signals, 'rect', { x: [13, 24, 35, 45, 56][i], y, width: 9, height: 3, fill: colours[c] }));
  add(signals, 'text', { class: 'row-name', x: 66, y: y + 3 }, name);
});
[['6', 'orange', 'Spread', 28], ['30', 'green', 'Pips to Open', 28], ['85', 'red', "Today's Range", 28], ['135', 'red', 'Prev Days Range', 34],
  ['130', 'red', 'Prev 5 Days Av', 34], ['135', 'red', 'Prev 10 Day Av', 34], ['106', 'red', 'Prev 30 Day Av', 34]]
  .forEach(([value, cls, label, x], i) => {
    add(byId('stats'), 'text', { class: 'value ' + cls, x: 12, y: 93 + i * 8 }, value);
    add(byId('stats'), 'text', { x, y: 93 + i * 8 }, label);
  });

['EURUSD,H4', 'EURUSD,H4', 'EURUSD,H4', 'EURJPY,H4', 'EURJPY,H4', 'EURJPY,Daily', 'AUDUSD,H4', 'AUDUSD,H4', 'AUDUSD,H4', 'AUDJPY,H4',
  'AUDJPY,H4', '*AUDJPY,H4', 'GBPUSD,H4', 'GBPUSD,H4', 'GBPUSD,H4', 'NZDUSD,H4', 'NZDUSD,H4', 'NZDUSD,H4', 'USDJPY,H4', 'USDJPY,H4',
  'USDJPY,H4', 'GBPJPY,H4', 'GBPJPY,Weekly', 'GBPJPY']
  .forEach((name) => {
    const tab = document.createElement('button');
    tab.className = 'tab' + (name[0] === '*' ? ' active' : '') + (name === 'GBPJPY' ? ' cut' : '');
    tab.textContent = name.replace('*', '');
    byId('tabs').appendChild(tab);
  });
const scroll = document.createElement('div');
scroll.className = 'tab-scroll';
scroll.innerHTML = '<button aria-label="Scroll left">◂</button><button aria-label="Scroll right">▸</button>';
byId('tabs').appendChild(scroll);
```
